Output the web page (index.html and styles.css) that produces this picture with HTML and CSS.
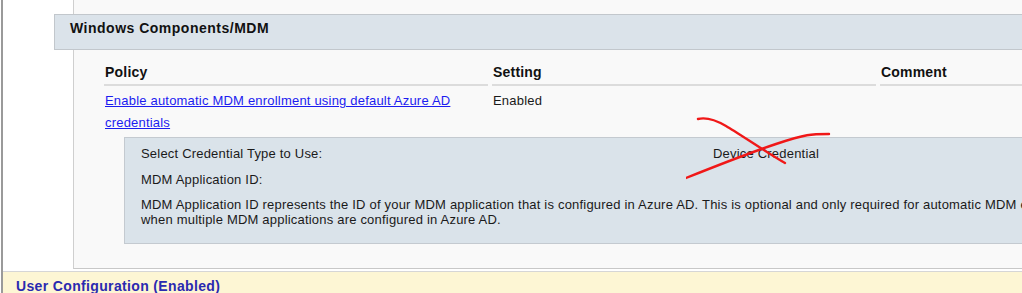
FILE: index.html
```html
<!DOCTYPE html>
<html lang="en">

<head>
    <meta charset="UTF-8">
    <title>Group Policy Report - Windows Components/MDM</title>
    <link rel="stylesheet" href="styles.css">
</head>

<body>
    <div class="frame">
        <div class="group">
            <div class="category">Windows Components/MDM</div>

            <div class="policy-table">
                <div class="col-head">Policy</div>
                <div class="col-head">Setting</div>
                <div class="col-head">Comment</div>

                <div class="cell"><a href="#">Enable automatic MDM enrollment using default Azure AD credentials</a></div>
                <div class="cell">Enabled</div>
                <div class="cell"></div>
            </div>

            <div class="details">
                <div class="detail-label">Select Credential Type to Use:</div>
                <div class="detail-value">Device Credential</div>
                <div class="detail-label">MDM Application ID:</div>
                <div class="detail-value"></div>
                <div class="detail-desc">MDM Application ID represents the ID of your MDM application that is configured in Azure AD. This is optional and only required for automatic MDM enrollment<br>when multiple MDM applications are configured in Azure AD.</div>
            </div>

            <!-- red cross drawn over the value -->
            <svg class="scribble" width="160" height="70" viewBox="0 0 160 70">
                <path d="M12 9 C 20 7, 28 9, 40 16 S 80 42, 99 53" fill="none" stroke="#f01818" stroke-width="2.4" stroke-linecap="round" />
                <path d="M0 68 C 30 56, 60 44, 90 34 S 125 24, 143 24" fill="none" stroke="#f01818" stroke-width="2.4" stroke-linecap="round" />
            </svg>
        </div>

        <div class="user-config">User Configuration (Enabled)</div>
    </div>
</body>

</html>
```

FILE: styles.css
```css
body {
    margin: 0;
    background-color: #ffffff;
    font-family: "Liberation Sans", Arial, sans-serif;
    font-size: 13px;
    letter-spacing: 0.2px;
    color: #1a1a1a;
    overflow: hidden;
}

.frame {
    width: 1160px;
    margin-left: 1px;
    border-left: 2px solid #9a9a9a;
    height: 293px;
}

.group {
    position: relative;
    margin-left: 70px;
    padding-top: 14px;
    padding-bottom: 24px;
    background-color: #f9f9f9;
    border-left: 1px solid #cfcfcf;
    border-bottom: 1px solid #c8c8c8;
}

.category {
    margin-left: -20px;
    height: 34px;
    line-height: 27px;
    padding-left: 15px;
    background-color: #dbe3ea;
    border: 1px solid #c2c7cc;
    border-right: none;
    font-weight: bold;
    font-size: 14px;
    letter-spacing: 0.5px;
    color: #111111;
}

.policy-table {
    display: grid;
    grid-template-columns: 388px 388px 400px;
    margin-left: 30px;
    margin-top: 14px;
}

.col-head {
    margin-right: 4px;
    padding-left: 1px;
    height: 20px;
    border-bottom: 2px solid #dcdcdc;
    font-weight: bold;
    font-size: 14px;
    color: #111111;
}

.cell {
    padding-left: 1px;
    padding-right: 6px;
    padding-top: 4px;
    line-height: 22px;
    height: 51px;
    box-sizing: border-box;
}

.cell a {
    color: #1c1cf0;
}

.details {
    display: grid;
    grid-template-columns: 572px 1fr;
    margin-left: 50px;
    padding: 3px 16px 16px;
    background-color: #dae3ea;
    border: 1px solid #c4cad0;
    border-right: none;
}

.detail-label,
.detail-value {
    line-height: 26px;
}

.detail-desc {
    grid-column: 1 / 3;
    line-height: 15px;
    padding-top: 4px;
}

.scribble {
    position: absolute;
    left: 612px;
    top: 110px;
}

.user-config {
    margin-top: 2px;
    height: 22px;
    line-height: 28px;
    padding-left: 13px;
    background-color: #fdf6d4;
    border-top: 1px solid #d6d6d6;
    font-weight: bold;
    font-size: 14px;
    letter-spacing: 0.35px;
    color: #2a2ab0;
    overflow: hidden;
}
```
